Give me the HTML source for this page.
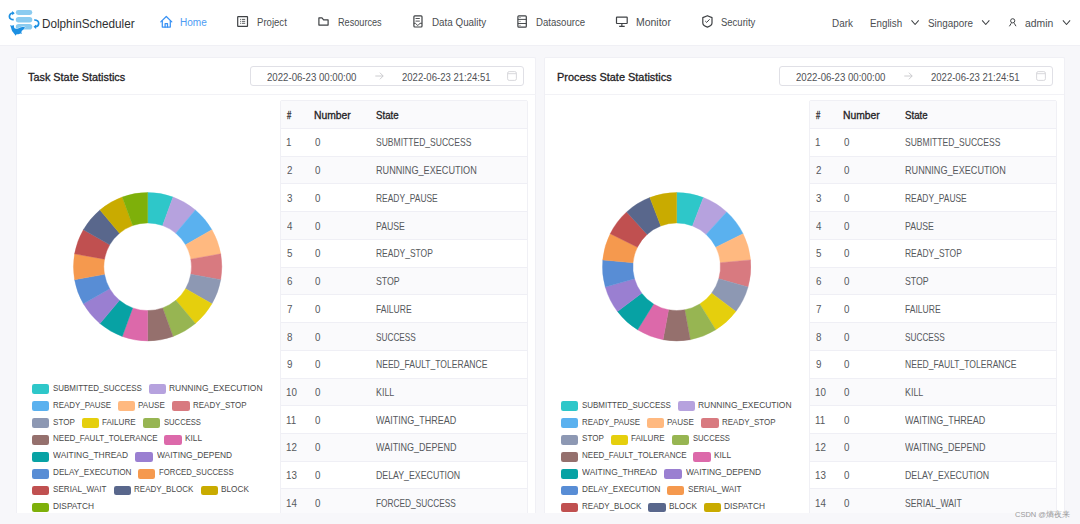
<!DOCTYPE html>
<html><head><meta charset="utf-8"><style>
*{box-sizing:border-box}
html,body{margin:0;padding:0}
body{width:1080px;height:524px;overflow:hidden;background:#f7f7fa;font-family:"Liberation Sans",sans-serif;position:relative}
.hdr{position:absolute;left:0;top:0;width:1080px;height:46px;background:#fff;border-bottom:1px solid #f0f0f5}
.ab{position:absolute}
.t{position:absolute;white-space:nowrap;transform-origin:0 0}
.card{position:absolute;top:57px;width:520px;height:456px;background:#fff;border:1px solid #f0f0f5;border-bottom:none;border-radius:2px 2px 0 0}
.hl{position:absolute;height:1px;background:#f2f2f6}
.dp{position:absolute;top:66px;width:274px;height:20px;border:1px solid #e0e0e6;border-radius:3px;background:#fff}
.sw{position:absolute;width:17.5px;height:9.8px;border-radius:2.2px}
.wm{position:absolute;left:1015px;top:510px;font-size:7.5px;line-height:10px;color:#9a9a9a;white-space:nowrap}
</style></head><body>
<div class="hdr"><svg class="ab" style="left:0;top:0" width="45" height="40" viewBox="0 0 45 40">
<rect x="15.8" y="10" width="16.5" height="4.9" rx="2.45" fill="#8acbf0"/>
<rect x="15.8" y="17" width="16.5" height="5.4" rx="2.7" fill="#8acbf0"/>
<rect x="15.8" y="24" width="16.5" height="5.6" rx="2.8" fill="#8acbf0"/>
<path d="M13.2 13.0C10.8 12.8 9.3 14.8 9.4 16.6C9.5 18.5 11.2 19.9 13.7 19.7" fill="none" stroke="#1b8fe2" stroke-width="1.7"/>
<path d="M12.2 10.9L14.7 13.2L12.2 15.3Z" fill="#1b8fe2"/>
<path d="M34.2 20.0C37 19.8 38.8 21.6 38.7 23.5C38.6 25.5 37 26.8 35 26.7" fill="none" stroke="#1b8fe2" stroke-width="1.7"/>
<path d="M36.1 24.5L33.5 26.8L36.1 28.9Z" fill="#1b8fe2"/>
<path d="M10.2 24.9L11.9 25.7L13.7 25C13.9 26 14 27.3 14.3 28.1C14.8 28.7 16.5 28.9 17.5 28.7C18.5 28.5 19.2 28 19.7 27.8C20.5 27.5 21.5 27.1 24 27L25 27.4C24.7 28.1 24.4 28.5 24 28.9C23.3 29.6 22.6 30.2 21.8 30.7L21.3 32.4L22.1 33.7L20.2 33.6C19.6 33.9 18.9 34.2 18.3 34.2L16.7 34.3L15.1 35.7L14.9 34.4C14.2 33.9 13.7 33.3 13.3 32.6C12.6 31.9 12.1 31.2 11.9 30.5C11.5 29.6 11.2 28.7 11.1 27.8C10.9 27.1 10.6 26.5 10.2 24.9Z" fill="#1b8fe2" stroke="#fff" stroke-width="0.9" paint-order="stroke"/>
</svg><svg class="ab" style="left:0;top:0" width="1080" height="45" viewBox="0 0 1080 45">
<g fill="none" stroke="#3a92f4" stroke-width="1.25" stroke-linecap="round" stroke-linejoin="round">
<path d="M160.8 21.9L166.3 16.5L171.8 21.9"/><path d="M162.3 20.5V27H170.3V20.5"/><path d="M165.1 27V23.5H167.5V27"/>
</g>
<g fill="none" stroke="#3f4245" stroke-width="1.2" stroke-linejoin="round">
<rect x="237.7" y="16.6" width="9.8" height="9.7" rx="0.4"/>
<path d="M240.1 19.4H241M241.8 19.4H245.2M240.1 21.35H241M241.8 21.35H245.2M240.1 23.3H241M241.8 23.3H245.2" stroke-width="0.85"/>
<path d="M318.9 17.9V25.1H328.1V19.8H323.6L322 17.9Z"/>
<rect x="413.9" y="15.9" width="8.1" height="11.1" rx="0.9"/>
<path d="M415.5 18.5H419.8M415.5 21.1H419.8" stroke-width="0.9"/>
<path d="M413.9 23.3H415.4C416.1 23.3 416.4 25.3 417.7 25.3C419 25.3 419.3 23.3 420 23.3H422" stroke-width="0.95"/>
<rect x="517.9" y="15.8" width="8.4" height="11.3" rx="0.9"/>
<path d="M517.9 19.4H526.3M517.9 23.5H526.3" stroke-width="0.95"/>
<path d="M519.5 17.5H520.5M519.5 21.4H520.5M519.5 25.4H520.5" stroke-width="0.8"/>
<rect x="616.5" y="17.1" width="10.7" height="6.4" rx="0.5"/>
<path d="M621.85 23.5V26.1M619.2 26.35H624.7"/>
<path d="M707.4 15.7L712 17.6V22.9C712 24.8 709.6 26.3 707.4 27.1C705.2 26.3 702.8 24.8 702.8 22.9V17.6Z"/>
<path d="M705.3 21.1L706.7 22.4L709.6 19.3" stroke-width="1"/>
<path d="M911.50 20.3L915.10 24.5L918.70 20.3M982.15 20.3L985.75 24.5L989.35 20.3M1062.90 20.3L1066.50 24.5L1070.10 20.3" stroke-width="1.05"/>
<circle cx="1012.7" cy="20.8" r="2.1" stroke-width="1"/>
<path d="M1011.3 23.2L1009.4 26.3M1014.2 23.2L1016 26.2" stroke-width="1"/>
</g>
</svg><span class="t" style="left:41.84px;top:17.87px;font-size:12.2px;line-height:12.2px;color:#2e2f31;transform:scaleX(0.9621);">DolphinScheduler</span><span class="t" style="left:179.85px;top:17.73px;font-size:10.0px;line-height:10.0px;color:#4d9cf3;transform:scaleX(1.0059);">Home</span><span class="t" style="left:256.88px;top:17.73px;font-size:10.0px;line-height:10.0px;color:#4a4d50;transform:scaleX(0.9574);">Project</span><span class="t" style="left:337.61px;top:17.73px;font-size:10.0px;line-height:10.0px;color:#4a4d50;transform:scaleX(0.9134);">Resources</span><span class="t" style="left:431.86px;top:17.73px;font-size:10.0px;line-height:10.0px;color:#4a4d50;transform:scaleX(0.9825);">Data Quality</span><span class="t" style="left:536.18px;top:17.73px;font-size:10.0px;line-height:10.0px;color:#4a4d50;transform:scaleX(0.9600);">Datasource</span><span class="t" style="left:635.82px;top:17.73px;font-size:10.0px;line-height:10.0px;color:#4a4d50;transform:scaleX(1.0462);">Monitor</span><span class="t" style="left:721.43px;top:17.73px;font-size:10.0px;line-height:10.0px;color:#4a4d50;transform:scaleX(0.9493);">Security</span><span class="t" style="left:831.76px;top:18.93px;font-size:10.0px;line-height:10.0px;color:#4a4d50;transform:scaleX(0.9877);">Dark</span><span class="t" style="left:870.27px;top:18.93px;font-size:10.0px;line-height:10.0px;color:#4a4d50;transform:scaleX(0.9778);">English</span><span class="t" style="left:927.81px;top:18.93px;font-size:10.0px;line-height:10.0px;color:#4a4d50;transform:scaleX(0.9855);">Singapore</span><span class="t" style="left:1025.28px;top:18.93px;font-size:10.0px;line-height:10.0px;color:#4a4d50;transform:scaleX(1.0362);">admin</span></div>
<div class="card" style="left:16px;width:520px"></div><span class="t" style="left:28.30px;top:71.77px;font-size:10.9px;line-height:10.9px;-webkit-text-stroke:0.3px currentColor;color:#1f2225;transform:scaleX(0.9974);">Task State Statistics</span><div class="dp" style="left:249.5px"></div><span class="t" style="left:266.86px;top:71.89px;font-size:11.0px;line-height:11.0px;color:#4f5256;transform:scaleX(0.8760);">2022-06-23 00:00:00</span><span class="t" style="left:402.37px;top:71.89px;font-size:11.0px;line-height:11.0px;color:#4f5256;transform:scaleX(0.8662);">2022-06-23 21:24:51</span><svg class="ab" style="left:375px;top:72px" width="9" height="8" viewBox="0 0 9 8"><path d="M0.3 4H8.2M4.9 0.7L8.2 4L4.9 7.3" fill="none" stroke="#c6c6ca" stroke-width="0.9"/></svg><svg class="ab" style="left:506.5px;top:71px" width="10" height="10" viewBox="0 0 10 10"><rect x="0.6" y="0.6" width="8.8" height="8.8" rx="1.6" fill="none" stroke="#d4d4d8" stroke-width="0.9"/><path d="M0.6 2.7H9.4" stroke="#d4d4d8" stroke-width="0.9"/></svg><div class="hl" style="left:17px;top:94px;width:518.5px"></div><svg class="ab" style="left:16px;top:57px" width="264" height="300" viewBox="0 0 264 300"><path d="M131.65 135.55A74.2 74.2 0 0 1 157.03 140.02L146.63 168.59A43.8 43.8 0 0 0 131.65 165.95Z" fill="#2ec7c9" stroke="#2ec7c9" stroke-width="0.4"/><path d="M157.03 140.02A74.2 74.2 0 0 1 179.34 152.91L159.80 176.20A43.8 43.8 0 0 0 146.63 168.59Z" fill="#b6a2de" stroke="#b6a2de" stroke-width="0.4"/><path d="M179.34 152.91A74.2 74.2 0 0 1 195.91 172.65L169.58 187.85A43.8 43.8 0 0 0 159.80 176.20Z" fill="#5ab1ef" stroke="#5ab1ef" stroke-width="0.4"/><path d="M195.91 172.65A74.2 74.2 0 0 1 204.72 196.87L174.78 202.14A43.8 43.8 0 0 0 169.58 187.85Z" fill="#ffb980" stroke="#ffb980" stroke-width="0.4"/><path d="M204.72 196.87A74.2 74.2 0 0 1 204.72 222.63L174.78 217.36A43.8 43.8 0 0 0 174.78 202.14Z" fill="#d87a80" stroke="#d87a80" stroke-width="0.4"/><path d="M204.72 222.63A74.2 74.2 0 0 1 195.91 246.85L169.58 231.65A43.8 43.8 0 0 0 174.78 217.36Z" fill="#8d98b3" stroke="#8d98b3" stroke-width="0.4"/><path d="M195.91 246.85A74.2 74.2 0 0 1 179.34 266.59L159.80 243.30A43.8 43.8 0 0 0 169.58 231.65Z" fill="#e5cf0d" stroke="#e5cf0d" stroke-width="0.4"/><path d="M179.34 266.59A74.2 74.2 0 0 1 157.03 279.48L146.63 250.91A43.8 43.8 0 0 0 159.80 243.30Z" fill="#97b552" stroke="#97b552" stroke-width="0.4"/><path d="M157.03 279.48A74.2 74.2 0 0 1 131.65 283.95L131.65 253.55A43.8 43.8 0 0 0 146.63 250.91Z" fill="#95706d" stroke="#95706d" stroke-width="0.4"/><path d="M131.65 283.95A74.2 74.2 0 0 1 106.27 279.48L116.67 250.91A43.8 43.8 0 0 0 131.65 253.55Z" fill="#dc69aa" stroke="#dc69aa" stroke-width="0.4"/><path d="M106.27 279.48A74.2 74.2 0 0 1 83.96 266.59L103.50 243.30A43.8 43.8 0 0 0 116.67 250.91Z" fill="#07a2a4" stroke="#07a2a4" stroke-width="0.4"/><path d="M83.96 266.59A74.2 74.2 0 0 1 67.39 246.85L93.72 231.65A43.8 43.8 0 0 0 103.50 243.30Z" fill="#9a7fd1" stroke="#9a7fd1" stroke-width="0.4"/><path d="M67.39 246.85A74.2 74.2 0 0 1 58.58 222.63L88.52 217.36A43.8 43.8 0 0 0 93.72 231.65Z" fill="#588dd5" stroke="#588dd5" stroke-width="0.4"/><path d="M58.58 222.63A74.2 74.2 0 0 1 58.58 196.87L88.52 202.14A43.8 43.8 0 0 0 88.52 217.36Z" fill="#f5994e" stroke="#f5994e" stroke-width="0.4"/><path d="M58.58 196.87A74.2 74.2 0 0 1 67.39 172.65L93.72 187.85A43.8 43.8 0 0 0 88.52 202.14Z" fill="#c05050" stroke="#c05050" stroke-width="0.4"/><path d="M67.39 172.65A74.2 74.2 0 0 1 83.96 152.91L103.50 176.20A43.8 43.8 0 0 0 93.72 187.85Z" fill="#59678c" stroke="#59678c" stroke-width="0.4"/><path d="M83.96 152.91A74.2 74.2 0 0 1 106.27 140.02L116.67 168.59A43.8 43.8 0 0 0 103.50 176.20Z" fill="#c9ab00" stroke="#c9ab00" stroke-width="0.4"/><path d="M106.27 140.02A74.2 74.2 0 0 1 131.65 135.55L131.65 165.95A43.8 43.8 0 0 0 116.67 168.59Z" fill="#7eb00a" stroke="#7eb00a" stroke-width="0.4"/></svg><i class="sw" style="left:31.90px;top:384.10px;background:#2ec7c9"></i><span class="t" style="left:52.93px;top:383.69px;font-size:8.4px;line-height:8.4px;color:#4a4a4a;transform:scaleX(0.9499);">SUBMITTED_SUCCESS</span><i class="sw" style="left:148.70px;top:384.10px;background:#b6a2de"></i><span class="t" style="left:169.44px;top:383.69px;font-size:8.4px;line-height:8.4px;color:#4a4a4a;transform:scaleX(1.0104);">RUNNING_EXECUTION</span><i class="sw" style="left:31.90px;top:401.03px;background:#5ab1ef"></i><span class="t" style="left:52.69px;top:400.62px;font-size:8.4px;line-height:8.4px;color:#4a4a4a;transform:scaleX(0.9477);">READY_PAUSE</span><i class="sw" style="left:117.70px;top:401.03px;background:#ffb980"></i><span class="t" style="left:138.48px;top:400.62px;font-size:8.4px;line-height:8.4px;color:#4a4a4a;transform:scaleX(0.9645);">PAUSE</span><i class="sw" style="left:172.20px;top:401.03px;background:#d87a80"></i><span class="t" style="left:192.99px;top:400.62px;font-size:8.4px;line-height:8.4px;color:#4a4a4a;transform:scaleX(0.9527);">READY_STOP</span><i class="sw" style="left:31.90px;top:417.96px;background:#8d98b3"></i><span class="t" style="left:52.92px;top:417.55px;font-size:8.4px;line-height:8.4px;color:#4a4a4a;transform:scaleX(0.9655);">STOP</span><i class="sw" style="left:81.60px;top:417.96px;background:#e5cf0d"></i><span class="t" style="left:102.38px;top:417.55px;font-size:8.4px;line-height:8.4px;color:#4a4a4a;transform:scaleX(0.9630);">FAILURE</span><i class="sw" style="left:142.80px;top:417.96px;background:#97b552"></i><span class="t" style="left:163.84px;top:417.55px;font-size:8.4px;line-height:8.4px;color:#4a4a4a;transform:scaleX(0.9132);">SUCCESS</span><i class="sw" style="left:31.90px;top:434.89px;background:#95706d"></i><span class="t" style="left:52.68px;top:434.48px;font-size:8.4px;line-height:8.4px;color:#4a4a4a;transform:scaleX(0.9593);">NEED_FAULT_TOLERANCE</span><i class="sw" style="left:164.20px;top:434.89px;background:#dc69aa"></i><span class="t" style="left:184.96px;top:434.48px;font-size:8.4px;line-height:8.4px;color:#4a4a4a;transform:scaleX(0.9908);">KILL</span><i class="sw" style="left:31.90px;top:451.82px;background:#07a2a4"></i><span class="t" style="left:53.40px;top:451.41px;font-size:8.4px;line-height:8.4px;color:#4a4a4a;transform:scaleX(1.0061);">WAITING_THREAD</span><i class="sw" style="left:135.30px;top:451.82px;background:#9a7fd1"></i><span class="t" style="left:156.80px;top:451.41px;font-size:8.4px;line-height:8.4px;color:#4a4a4a;transform:scaleX(1.0007);">WAITING_DEPEND</span><i class="sw" style="left:31.90px;top:468.75px;background:#588dd5"></i><span class="t" style="left:52.67px;top:468.34px;font-size:8.4px;line-height:8.4px;color:#4a4a4a;transform:scaleX(0.9759);">DELAY_EXECUTION</span><i class="sw" style="left:137.70px;top:468.75px;background:#f5994e"></i><span class="t" style="left:158.50px;top:468.34px;font-size:8.4px;line-height:8.4px;color:#4a4a4a;transform:scaleX(0.9270);">FORCED_SUCCESS</span><i class="sw" style="left:31.90px;top:485.68px;background:#c05050"></i><span class="t" style="left:52.91px;top:485.27px;font-size:8.4px;line-height:8.4px;color:#4a4a4a;transform:scaleX(0.9706);">SERIAL_WAIT</span><i class="sw" style="left:113.50px;top:485.68px;background:#59678c"></i><span class="t" style="left:134.28px;top:485.27px;font-size:8.4px;line-height:8.4px;color:#4a4a4a;transform:scaleX(0.9574);">READY_BLOCK</span><i class="sw" style="left:200.60px;top:485.68px;background:#c9ab00"></i><span class="t" style="left:221.36px;top:485.27px;font-size:8.4px;line-height:8.4px;color:#4a4a4a;transform:scaleX(0.9818);">BLOCK</span><i class="sw" style="left:31.90px;top:502.61px;background:#7eb00a"></i><span class="t" style="left:52.65px;top:502.20px;font-size:8.4px;line-height:8.4px;color:#4a4a4a;transform:scaleX(0.9962);">DISPATCH</span><div class="ab" style="left:279.6px;top:100.4px;width:248.2px;height:420px;border:1px solid #f0f0f5;border-radius:2px"></div><div class="ab" style="left:280.5px;top:101px;width:246.5px;height:28.0px;background:#fafafc;border-bottom:1px solid #efeff5"></div><div class="ab" style="left:280.5px;top:129.00px;width:246.5px;height:27.73px;background:#fff;border-bottom:1px solid #efeff5"></div><div class="ab" style="left:280.5px;top:156.73px;width:246.5px;height:27.73px;background:#fafafc;border-bottom:1px solid #efeff5"></div><div class="ab" style="left:280.5px;top:184.46px;width:246.5px;height:27.73px;background:#fff;border-bottom:1px solid #efeff5"></div><div class="ab" style="left:280.5px;top:212.19px;width:246.5px;height:27.73px;background:#fafafc;border-bottom:1px solid #efeff5"></div><div class="ab" style="left:280.5px;top:239.92px;width:246.5px;height:27.73px;background:#fff;border-bottom:1px solid #efeff5"></div><div class="ab" style="left:280.5px;top:267.65px;width:246.5px;height:27.73px;background:#fafafc;border-bottom:1px solid #efeff5"></div><div class="ab" style="left:280.5px;top:295.38px;width:246.5px;height:27.73px;background:#fff;border-bottom:1px solid #efeff5"></div><div class="ab" style="left:280.5px;top:323.11px;width:246.5px;height:27.73px;background:#fafafc;border-bottom:1px solid #efeff5"></div><div class="ab" style="left:280.5px;top:350.84px;width:246.5px;height:27.73px;background:#fff;border-bottom:1px solid #efeff5"></div><div class="ab" style="left:280.5px;top:378.57px;width:246.5px;height:27.73px;background:#fafafc;border-bottom:1px solid #efeff5"></div><div class="ab" style="left:280.5px;top:406.30px;width:246.5px;height:27.73px;background:#fff;border-bottom:1px solid #efeff5"></div><div class="ab" style="left:280.5px;top:434.03px;width:246.5px;height:27.73px;background:#fafafc;border-bottom:1px solid #efeff5"></div><div class="ab" style="left:280.5px;top:461.76px;width:246.5px;height:27.73px;background:#fff;border-bottom:1px solid #efeff5"></div><div class="ab" style="left:280.5px;top:489.49px;width:246.5px;height:27.73px;background:#fafafc;border-bottom:1px solid #efeff5"></div><span class="t" style="left:287.08px;top:110.68px;font-size:10.3px;line-height:10.3px;-webkit-text-stroke:0.3px currentColor;color:#1f2225;transform:scaleX(0.7360);">#</span><span class="t" style="left:313.85px;top:110.68px;font-size:10.3px;line-height:10.3px;-webkit-text-stroke:0.3px currentColor;color:#1f2225;transform:scaleX(1.0028);">Number</span><span class="t" style="left:375.66px;top:110.68px;font-size:10.3px;line-height:10.3px;-webkit-text-stroke:0.3px currentColor;color:#1f2225;transform:scaleX(0.9404);">State</span><span class="t" style="left:286.27px;top:138.45px;font-size:10.1px;line-height:10.1px;color:#56595d;transform:scaleX(0.9700);">1</span><span class="t" style="left:314.56px;top:138.45px;font-size:10.1px;line-height:10.1px;color:#56595d;transform:scaleX(0.9700);">0</span><span class="t" style="left:375.78px;top:138.45px;font-size:10.1px;line-height:10.1px;color:#56595d;transform:scaleX(0.8456);">SUBMITTED_SUCCESS</span><span class="t" style="left:286.51px;top:166.18px;font-size:10.1px;line-height:10.1px;color:#56595d;transform:scaleX(0.9700);">2</span><span class="t" style="left:314.56px;top:166.18px;font-size:10.1px;line-height:10.1px;color:#56595d;transform:scaleX(0.9700);">0</span><span class="t" style="left:375.52px;top:166.18px;font-size:10.1px;line-height:10.1px;color:#56595d;transform:scaleX(0.9027);">RUNNING_EXECUTION</span><span class="t" style="left:286.51px;top:193.91px;font-size:10.1px;line-height:10.1px;color:#56595d;transform:scaleX(0.9700);">3</span><span class="t" style="left:314.56px;top:193.91px;font-size:10.1px;line-height:10.1px;color:#56595d;transform:scaleX(0.9700);">0</span><span class="t" style="left:375.57px;top:193.91px;font-size:10.1px;line-height:10.1px;color:#56595d;transform:scaleX(0.8357);">READY_PAUSE</span><span class="t" style="left:286.76px;top:221.64px;font-size:10.1px;line-height:10.1px;color:#56595d;transform:scaleX(0.9700);">4</span><span class="t" style="left:314.56px;top:221.64px;font-size:10.1px;line-height:10.1px;color:#56595d;transform:scaleX(0.9700);">0</span><span class="t" style="left:375.55px;top:221.64px;font-size:10.1px;line-height:10.1px;color:#56595d;transform:scaleX(0.8620);">PAUSE</span><span class="t" style="left:286.51px;top:249.37px;font-size:10.1px;line-height:10.1px;color:#56595d;transform:scaleX(0.9700);">5</span><span class="t" style="left:314.56px;top:249.37px;font-size:10.1px;line-height:10.1px;color:#56595d;transform:scaleX(0.9700);">0</span><span class="t" style="left:375.57px;top:249.37px;font-size:10.1px;line-height:10.1px;color:#56595d;transform:scaleX(0.8391);">READY_STOP</span><span class="t" style="left:286.51px;top:277.10px;font-size:10.1px;line-height:10.1px;color:#56595d;transform:scaleX(0.9700);">6</span><span class="t" style="left:314.56px;top:277.10px;font-size:10.1px;line-height:10.1px;color:#56595d;transform:scaleX(0.9700);">0</span><span class="t" style="left:375.77px;top:277.10px;font-size:10.1px;line-height:10.1px;color:#56595d;transform:scaleX(0.8686);">STOP</span><span class="t" style="left:286.51px;top:304.83px;font-size:10.1px;line-height:10.1px;color:#56595d;transform:scaleX(0.9700);">7</span><span class="t" style="left:314.56px;top:304.83px;font-size:10.1px;line-height:10.1px;color:#56595d;transform:scaleX(0.9700);">0</span><span class="t" style="left:375.57px;top:304.83px;font-size:10.1px;line-height:10.1px;color:#56595d;transform:scaleX(0.8463);">FAILURE</span><span class="t" style="left:286.51px;top:332.56px;font-size:10.1px;line-height:10.1px;color:#56595d;transform:scaleX(0.9700);">8</span><span class="t" style="left:314.56px;top:332.56px;font-size:10.1px;line-height:10.1px;color:#56595d;transform:scaleX(0.9700);">0</span><span class="t" style="left:375.79px;top:332.56px;font-size:10.1px;line-height:10.1px;color:#56595d;transform:scaleX(0.8167);">SUCCESS</span><span class="t" style="left:286.51px;top:360.29px;font-size:10.1px;line-height:10.1px;color:#56595d;transform:scaleX(0.9700);">9</span><span class="t" style="left:314.56px;top:360.29px;font-size:10.1px;line-height:10.1px;color:#56595d;transform:scaleX(0.9700);">0</span><span class="t" style="left:375.56px;top:360.29px;font-size:10.1px;line-height:10.1px;color:#56595d;transform:scaleX(0.8476);">NEED_FAULT_TOLERANCE</span><span class="t" style="left:286.27px;top:388.02px;font-size:10.1px;line-height:10.1px;color:#56595d;transform:scaleX(0.9700);">10</span><span class="t" style="left:314.56px;top:388.02px;font-size:10.1px;line-height:10.1px;color:#56595d;transform:scaleX(0.9700);">0</span><span class="t" style="left:375.54px;top:388.02px;font-size:10.1px;line-height:10.1px;color:#56595d;transform:scaleX(0.8810);">KILL</span><span class="t" style="left:286.27px;top:415.75px;font-size:10.1px;line-height:10.1px;color:#56595d;transform:scaleX(0.9700);">11</span><span class="t" style="left:314.56px;top:415.75px;font-size:10.1px;line-height:10.1px;color:#56595d;transform:scaleX(0.9700);">0</span><span class="t" style="left:376.20px;top:415.75px;font-size:10.1px;line-height:10.1px;color:#56595d;transform:scaleX(0.8927);">WAITING_THREAD</span><span class="t" style="left:286.27px;top:443.48px;font-size:10.1px;line-height:10.1px;color:#56595d;transform:scaleX(0.9700);">12</span><span class="t" style="left:314.56px;top:443.48px;font-size:10.1px;line-height:10.1px;color:#56595d;transform:scaleX(0.9700);">0</span><span class="t" style="left:376.20px;top:443.48px;font-size:10.1px;line-height:10.1px;color:#56595d;transform:scaleX(0.8900);">WAITING_DEPEND</span><span class="t" style="left:286.27px;top:471.21px;font-size:10.1px;line-height:10.1px;color:#56595d;transform:scaleX(0.9700);">13</span><span class="t" style="left:314.56px;top:471.21px;font-size:10.1px;line-height:10.1px;color:#56595d;transform:scaleX(0.9700);">0</span><span class="t" style="left:375.55px;top:471.21px;font-size:10.1px;line-height:10.1px;color:#56595d;transform:scaleX(0.8693);">DELAY_EXECUTION</span><span class="t" style="left:286.27px;top:498.94px;font-size:10.1px;line-height:10.1px;color:#56595d;transform:scaleX(0.9700);">14</span><span class="t" style="left:314.56px;top:498.94px;font-size:10.1px;line-height:10.1px;color:#56595d;transform:scaleX(0.9700);">0</span><span class="t" style="left:375.58px;top:498.94px;font-size:10.1px;line-height:10.1px;color:#56595d;transform:scaleX(0.8219);">FORCED_SUCCESS</span>
<div class="card" style="left:544.4px;width:520.6px"></div><span class="t" style="left:556.55px;top:71.77px;font-size:10.9px;line-height:10.9px;-webkit-text-stroke:0.3px currentColor;color:#1f2225;transform:scaleX(1.0026);">Process State Statistics</span><div class="dp" style="left:778.5px"></div><span class="t" style="left:795.86px;top:71.89px;font-size:11.0px;line-height:11.0px;color:#4f5256;transform:scaleX(0.8760);">2022-06-23 00:00:00</span><span class="t" style="left:931.37px;top:71.89px;font-size:11.0px;line-height:11.0px;color:#4f5256;transform:scaleX(0.8662);">2022-06-23 21:24:51</span><svg class="ab" style="left:904px;top:72px" width="9" height="8" viewBox="0 0 9 8"><path d="M0.3 4H8.2M4.9 0.7L8.2 4L4.9 7.3" fill="none" stroke="#c6c6ca" stroke-width="0.9"/></svg><svg class="ab" style="left:1035.5px;top:71px" width="10" height="10" viewBox="0 0 10 10"><rect x="0.6" y="0.6" width="8.8" height="8.8" rx="1.6" fill="none" stroke="#d4d4d8" stroke-width="0.9"/><path d="M0.6 2.7H9.4" stroke="#d4d4d8" stroke-width="0.9"/></svg><div class="hl" style="left:545.4px;top:94px;width:518.5px"></div><svg class="ab" style="left:545px;top:57px" width="264" height="300" viewBox="0 0 264 300"><path d="M131.65 135.55A74.2 74.2 0 0 1 158.45 140.56L147.47 168.91A43.8 43.8 0 0 0 131.65 165.95Z" fill="#2ec7c9" stroke="#2ec7c9" stroke-width="0.4"/><path d="M158.45 140.56A74.2 74.2 0 0 1 181.64 154.92L161.16 177.38A43.8 43.8 0 0 0 147.47 168.91Z" fill="#b6a2de" stroke="#b6a2de" stroke-width="0.4"/><path d="M181.64 154.92A74.2 74.2 0 0 1 198.07 176.68L170.86 190.23A43.8 43.8 0 0 0 161.16 177.38Z" fill="#5ab1ef" stroke="#5ab1ef" stroke-width="0.4"/><path d="M198.07 176.68A74.2 74.2 0 0 1 205.53 202.90L175.26 205.71A43.8 43.8 0 0 0 170.86 190.23Z" fill="#ffb980" stroke="#ffb980" stroke-width="0.4"/><path d="M205.53 202.90A74.2 74.2 0 0 1 203.02 230.06L173.78 221.74A43.8 43.8 0 0 0 175.26 205.71Z" fill="#d87a80" stroke="#d87a80" stroke-width="0.4"/><path d="M203.02 230.06A74.2 74.2 0 0 1 190.86 254.47L166.60 236.15A43.8 43.8 0 0 0 173.78 221.74Z" fill="#8d98b3" stroke="#8d98b3" stroke-width="0.4"/><path d="M190.86 254.47A74.2 74.2 0 0 1 170.71 272.84L154.71 246.99A43.8 43.8 0 0 0 166.60 236.15Z" fill="#e5cf0d" stroke="#e5cf0d" stroke-width="0.4"/><path d="M170.71 272.84A74.2 74.2 0 0 1 145.28 282.69L139.70 252.80A43.8 43.8 0 0 0 154.71 246.99Z" fill="#97b552" stroke="#97b552" stroke-width="0.4"/><path d="M145.28 282.69A74.2 74.2 0 0 1 118.02 282.69L123.60 252.80A43.8 43.8 0 0 0 139.70 252.80Z" fill="#95706d" stroke="#95706d" stroke-width="0.4"/><path d="M118.02 282.69A74.2 74.2 0 0 1 92.59 272.84L108.59 246.99A43.8 43.8 0 0 0 123.60 252.80Z" fill="#dc69aa" stroke="#dc69aa" stroke-width="0.4"/><path d="M92.59 272.84A74.2 74.2 0 0 1 72.44 254.47L96.70 236.15A43.8 43.8 0 0 0 108.59 246.99Z" fill="#07a2a4" stroke="#07a2a4" stroke-width="0.4"/><path d="M72.44 254.47A74.2 74.2 0 0 1 60.28 230.06L89.52 221.74A43.8 43.8 0 0 0 96.70 236.15Z" fill="#9a7fd1" stroke="#9a7fd1" stroke-width="0.4"/><path d="M60.28 230.06A74.2 74.2 0 0 1 57.77 202.90L88.04 205.71A43.8 43.8 0 0 0 89.52 221.74Z" fill="#588dd5" stroke="#588dd5" stroke-width="0.4"/><path d="M57.77 202.90A74.2 74.2 0 0 1 65.23 176.68L92.44 190.23A43.8 43.8 0 0 0 88.04 205.71Z" fill="#f5994e" stroke="#f5994e" stroke-width="0.4"/><path d="M65.23 176.68A74.2 74.2 0 0 1 81.66 154.92L102.14 177.38A43.8 43.8 0 0 0 92.44 190.23Z" fill="#c05050" stroke="#c05050" stroke-width="0.4"/><path d="M81.66 154.92A74.2 74.2 0 0 1 104.85 140.56L115.83 168.91A43.8 43.8 0 0 0 102.14 177.38Z" fill="#59678c" stroke="#59678c" stroke-width="0.4"/><path d="M104.85 140.56A74.2 74.2 0 0 1 131.65 135.55L131.65 165.95A43.8 43.8 0 0 0 115.83 168.91Z" fill="#c9ab00" stroke="#c9ab00" stroke-width="0.4"/></svg><i class="sw" style="left:560.90px;top:401.00px;background:#2ec7c9"></i><span class="t" style="left:581.93px;top:400.59px;font-size:8.4px;line-height:8.4px;color:#4a4a4a;transform:scaleX(0.9499);">SUBMITTED_SUCCESS</span><i class="sw" style="left:677.70px;top:401.00px;background:#b6a2de"></i><span class="t" style="left:698.44px;top:400.59px;font-size:8.4px;line-height:8.4px;color:#4a4a4a;transform:scaleX(1.0104);">RUNNING_EXECUTION</span><i class="sw" style="left:560.90px;top:417.93px;background:#5ab1ef"></i><span class="t" style="left:581.69px;top:417.52px;font-size:8.4px;line-height:8.4px;color:#4a4a4a;transform:scaleX(0.9477);">READY_PAUSE</span><i class="sw" style="left:646.70px;top:417.93px;background:#ffb980"></i><span class="t" style="left:667.48px;top:417.52px;font-size:8.4px;line-height:8.4px;color:#4a4a4a;transform:scaleX(0.9645);">PAUSE</span><i class="sw" style="left:701.20px;top:417.93px;background:#d87a80"></i><span class="t" style="left:721.99px;top:417.52px;font-size:8.4px;line-height:8.4px;color:#4a4a4a;transform:scaleX(0.9527);">READY_STOP</span><i class="sw" style="left:560.90px;top:434.86px;background:#8d98b3"></i><span class="t" style="left:581.92px;top:434.45px;font-size:8.4px;line-height:8.4px;color:#4a4a4a;transform:scaleX(0.9655);">STOP</span><i class="sw" style="left:610.60px;top:434.86px;background:#e5cf0d"></i><span class="t" style="left:631.38px;top:434.45px;font-size:8.4px;line-height:8.4px;color:#4a4a4a;transform:scaleX(0.9630);">FAILURE</span><i class="sw" style="left:671.80px;top:434.86px;background:#97b552"></i><span class="t" style="left:692.84px;top:434.45px;font-size:8.4px;line-height:8.4px;color:#4a4a4a;transform:scaleX(0.9132);">SUCCESS</span><i class="sw" style="left:560.90px;top:451.79px;background:#95706d"></i><span class="t" style="left:581.68px;top:451.38px;font-size:8.4px;line-height:8.4px;color:#4a4a4a;transform:scaleX(0.9593);">NEED_FAULT_TOLERANCE</span><i class="sw" style="left:693.20px;top:451.79px;background:#dc69aa"></i><span class="t" style="left:713.96px;top:451.38px;font-size:8.4px;line-height:8.4px;color:#4a4a4a;transform:scaleX(0.9908);">KILL</span><i class="sw" style="left:560.90px;top:468.72px;background:#07a2a4"></i><span class="t" style="left:582.40px;top:468.31px;font-size:8.4px;line-height:8.4px;color:#4a4a4a;transform:scaleX(1.0061);">WAITING_THREAD</span><i class="sw" style="left:664.30px;top:468.72px;background:#9a7fd1"></i><span class="t" style="left:685.80px;top:468.31px;font-size:8.4px;line-height:8.4px;color:#4a4a4a;transform:scaleX(1.0007);">WAITING_DEPEND</span><i class="sw" style="left:560.90px;top:485.65px;background:#588dd5"></i><span class="t" style="left:581.67px;top:485.24px;font-size:8.4px;line-height:8.4px;color:#4a4a4a;transform:scaleX(0.9759);">DELAY_EXECUTION</span><i class="sw" style="left:666.70px;top:485.65px;background:#f5994e"></i><span class="t" style="left:687.71px;top:485.24px;font-size:8.4px;line-height:8.4px;color:#4a4a4a;transform:scaleX(0.9706);">SERIAL_WAIT</span><i class="sw" style="left:560.90px;top:502.58px;background:#c05050"></i><span class="t" style="left:581.68px;top:502.17px;font-size:8.4px;line-height:8.4px;color:#4a4a4a;transform:scaleX(0.9574);">READY_BLOCK</span><i class="sw" style="left:648.00px;top:502.58px;background:#59678c"></i><span class="t" style="left:668.76px;top:502.17px;font-size:8.4px;line-height:8.4px;color:#4a4a4a;transform:scaleX(0.9818);">BLOCK</span><i class="sw" style="left:703.70px;top:502.58px;background:#c9ab00"></i><span class="t" style="left:724.45px;top:502.17px;font-size:8.4px;line-height:8.4px;color:#4a4a4a;transform:scaleX(0.9962);">DISPATCH</span><div class="ab" style="left:808.6px;top:100.4px;width:248.2px;height:420px;border:1px solid #f0f0f5;border-radius:2px"></div><div class="ab" style="left:809.5px;top:101px;width:246.5px;height:28.0px;background:#fafafc;border-bottom:1px solid #efeff5"></div><div class="ab" style="left:809.5px;top:129.00px;width:246.5px;height:27.73px;background:#fff;border-bottom:1px solid #efeff5"></div><div class="ab" style="left:809.5px;top:156.73px;width:246.5px;height:27.73px;background:#fafafc;border-bottom:1px solid #efeff5"></div><div class="ab" style="left:809.5px;top:184.46px;width:246.5px;height:27.73px;background:#fff;border-bottom:1px solid #efeff5"></div><div class="ab" style="left:809.5px;top:212.19px;width:246.5px;height:27.73px;background:#fafafc;border-bottom:1px solid #efeff5"></div><div class="ab" style="left:809.5px;top:239.92px;width:246.5px;height:27.73px;background:#fff;border-bottom:1px solid #efeff5"></div><div class="ab" style="left:809.5px;top:267.65px;width:246.5px;height:27.73px;background:#fafafc;border-bottom:1px solid #efeff5"></div><div class="ab" style="left:809.5px;top:295.38px;width:246.5px;height:27.73px;background:#fff;border-bottom:1px solid #efeff5"></div><div class="ab" style="left:809.5px;top:323.11px;width:246.5px;height:27.73px;background:#fafafc;border-bottom:1px solid #efeff5"></div><div class="ab" style="left:809.5px;top:350.84px;width:246.5px;height:27.73px;background:#fff;border-bottom:1px solid #efeff5"></div><div class="ab" style="left:809.5px;top:378.57px;width:246.5px;height:27.73px;background:#fafafc;border-bottom:1px solid #efeff5"></div><div class="ab" style="left:809.5px;top:406.30px;width:246.5px;height:27.73px;background:#fff;border-bottom:1px solid #efeff5"></div><div class="ab" style="left:809.5px;top:434.03px;width:246.5px;height:27.73px;background:#fafafc;border-bottom:1px solid #efeff5"></div><div class="ab" style="left:809.5px;top:461.76px;width:246.5px;height:27.73px;background:#fff;border-bottom:1px solid #efeff5"></div><div class="ab" style="left:809.5px;top:489.49px;width:246.5px;height:27.73px;background:#fafafc;border-bottom:1px solid #efeff5"></div><span class="t" style="left:816.08px;top:110.68px;font-size:10.3px;line-height:10.3px;-webkit-text-stroke:0.3px currentColor;color:#1f2225;transform:scaleX(0.7360);">#</span><span class="t" style="left:842.85px;top:110.68px;font-size:10.3px;line-height:10.3px;-webkit-text-stroke:0.3px currentColor;color:#1f2225;transform:scaleX(1.0028);">Number</span><span class="t" style="left:904.66px;top:110.68px;font-size:10.3px;line-height:10.3px;-webkit-text-stroke:0.3px currentColor;color:#1f2225;transform:scaleX(0.9404);">State</span><span class="t" style="left:815.27px;top:138.45px;font-size:10.1px;line-height:10.1px;color:#56595d;transform:scaleX(0.9700);">1</span><span class="t" style="left:843.56px;top:138.45px;font-size:10.1px;line-height:10.1px;color:#56595d;transform:scaleX(0.9700);">0</span><span class="t" style="left:904.78px;top:138.45px;font-size:10.1px;line-height:10.1px;color:#56595d;transform:scaleX(0.8456);">SUBMITTED_SUCCESS</span><span class="t" style="left:815.51px;top:166.18px;font-size:10.1px;line-height:10.1px;color:#56595d;transform:scaleX(0.9700);">2</span><span class="t" style="left:843.56px;top:166.18px;font-size:10.1px;line-height:10.1px;color:#56595d;transform:scaleX(0.9700);">0</span><span class="t" style="left:904.52px;top:166.18px;font-size:10.1px;line-height:10.1px;color:#56595d;transform:scaleX(0.9027);">RUNNING_EXECUTION</span><span class="t" style="left:815.51px;top:193.91px;font-size:10.1px;line-height:10.1px;color:#56595d;transform:scaleX(0.9700);">3</span><span class="t" style="left:843.56px;top:193.91px;font-size:10.1px;line-height:10.1px;color:#56595d;transform:scaleX(0.9700);">0</span><span class="t" style="left:904.57px;top:193.91px;font-size:10.1px;line-height:10.1px;color:#56595d;transform:scaleX(0.8357);">READY_PAUSE</span><span class="t" style="left:815.76px;top:221.64px;font-size:10.1px;line-height:10.1px;color:#56595d;transform:scaleX(0.9700);">4</span><span class="t" style="left:843.56px;top:221.64px;font-size:10.1px;line-height:10.1px;color:#56595d;transform:scaleX(0.9700);">0</span><span class="t" style="left:904.55px;top:221.64px;font-size:10.1px;line-height:10.1px;color:#56595d;transform:scaleX(0.8620);">PAUSE</span><span class="t" style="left:815.51px;top:249.37px;font-size:10.1px;line-height:10.1px;color:#56595d;transform:scaleX(0.9700);">5</span><span class="t" style="left:843.56px;top:249.37px;font-size:10.1px;line-height:10.1px;color:#56595d;transform:scaleX(0.9700);">0</span><span class="t" style="left:904.57px;top:249.37px;font-size:10.1px;line-height:10.1px;color:#56595d;transform:scaleX(0.8391);">READY_STOP</span><span class="t" style="left:815.51px;top:277.10px;font-size:10.1px;line-height:10.1px;color:#56595d;transform:scaleX(0.9700);">6</span><span class="t" style="left:843.56px;top:277.10px;font-size:10.1px;line-height:10.1px;color:#56595d;transform:scaleX(0.9700);">0</span><span class="t" style="left:904.77px;top:277.10px;font-size:10.1px;line-height:10.1px;color:#56595d;transform:scaleX(0.8686);">STOP</span><span class="t" style="left:815.51px;top:304.83px;font-size:10.1px;line-height:10.1px;color:#56595d;transform:scaleX(0.9700);">7</span><span class="t" style="left:843.56px;top:304.83px;font-size:10.1px;line-height:10.1px;color:#56595d;transform:scaleX(0.9700);">0</span><span class="t" style="left:904.57px;top:304.83px;font-size:10.1px;line-height:10.1px;color:#56595d;transform:scaleX(0.8463);">FAILURE</span><span class="t" style="left:815.51px;top:332.56px;font-size:10.1px;line-height:10.1px;color:#56595d;transform:scaleX(0.9700);">8</span><span class="t" style="left:843.56px;top:332.56px;font-size:10.1px;line-height:10.1px;color:#56595d;transform:scaleX(0.9700);">0</span><span class="t" style="left:904.79px;top:332.56px;font-size:10.1px;line-height:10.1px;color:#56595d;transform:scaleX(0.8167);">SUCCESS</span><span class="t" style="left:815.51px;top:360.29px;font-size:10.1px;line-height:10.1px;color:#56595d;transform:scaleX(0.9700);">9</span><span class="t" style="left:843.56px;top:360.29px;font-size:10.1px;line-height:10.1px;color:#56595d;transform:scaleX(0.9700);">0</span><span class="t" style="left:904.56px;top:360.29px;font-size:10.1px;line-height:10.1px;color:#56595d;transform:scaleX(0.8476);">NEED_FAULT_TOLERANCE</span><span class="t" style="left:815.27px;top:388.02px;font-size:10.1px;line-height:10.1px;color:#56595d;transform:scaleX(0.9700);">10</span><span class="t" style="left:843.56px;top:388.02px;font-size:10.1px;line-height:10.1px;color:#56595d;transform:scaleX(0.9700);">0</span><span class="t" style="left:904.54px;top:388.02px;font-size:10.1px;line-height:10.1px;color:#56595d;transform:scaleX(0.8810);">KILL</span><span class="t" style="left:815.27px;top:415.75px;font-size:10.1px;line-height:10.1px;color:#56595d;transform:scaleX(0.9700);">11</span><span class="t" style="left:843.56px;top:415.75px;font-size:10.1px;line-height:10.1px;color:#56595d;transform:scaleX(0.9700);">0</span><span class="t" style="left:905.20px;top:415.75px;font-size:10.1px;line-height:10.1px;color:#56595d;transform:scaleX(0.8927);">WAITING_THREAD</span><span class="t" style="left:815.27px;top:443.48px;font-size:10.1px;line-height:10.1px;color:#56595d;transform:scaleX(0.9700);">12</span><span class="t" style="left:843.56px;top:443.48px;font-size:10.1px;line-height:10.1px;color:#56595d;transform:scaleX(0.9700);">0</span><span class="t" style="left:905.20px;top:443.48px;font-size:10.1px;line-height:10.1px;color:#56595d;transform:scaleX(0.8900);">WAITING_DEPEND</span><span class="t" style="left:815.27px;top:471.21px;font-size:10.1px;line-height:10.1px;color:#56595d;transform:scaleX(0.9700);">13</span><span class="t" style="left:843.56px;top:471.21px;font-size:10.1px;line-height:10.1px;color:#56595d;transform:scaleX(0.9700);">0</span><span class="t" style="left:904.55px;top:471.21px;font-size:10.1px;line-height:10.1px;color:#56595d;transform:scaleX(0.8693);">DELAY_EXECUTION</span><span class="t" style="left:815.27px;top:498.94px;font-size:10.1px;line-height:10.1px;color:#56595d;transform:scaleX(0.9700);">14</span><span class="t" style="left:843.56px;top:498.94px;font-size:10.1px;line-height:10.1px;color:#56595d;transform:scaleX(0.9700);">0</span><span class="t" style="left:904.77px;top:498.94px;font-size:10.1px;line-height:10.1px;color:#56595d;transform:scaleX(0.8548);">SERIAL_WAIT</span>
<div class="ab" style="left:0;top:513px;width:1080px;height:11px;background:#f7f7fa"></div>
<div class="wm">CSDN @熵夜来</div>
</body></html>
